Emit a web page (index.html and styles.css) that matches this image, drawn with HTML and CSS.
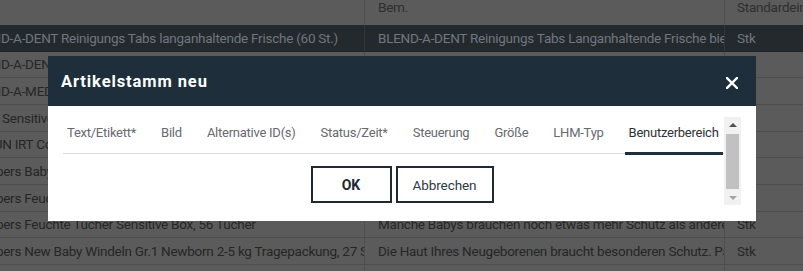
FILE: index.html
```html
<!DOCTYPE html>
<html lang="de">
<head>
<meta charset="utf-8">
<title>Artikelstamm neu</title>
<link rel="stylesheet" href="styles.css">
</head>
<body>
<div class="page">
<div class="grid">
  <div class="row head">
    <div class="cell c1">Bezeichnung</div>
    <div class="cell c2">Bem.</div>
    <div class="cell c3">Standardeinheit</div>
  </div>
  <div class="row selected">
    <div class="cell c1">BLEND-A-DENT Reinigungs Tabs langanhaltende Frische (60 St.)</div>
    <div class="cell c2">BLEND-A-DENT Reinigungs Tabs Langanhaltende Frische bieten</div>
    <div class="cell c3">Stk</div>
  </div>
  <div class="row">
    <div class="cell c1">BLEND-A-DENT Extra Stark Haftcreme Neutral (47 g)</div>
    <div class="cell c2">BLEND-A-DENT Extra Stark Haftcreme sorgt für</div>
    <div class="cell c3">Stk</div>
  </div>
  <div class="row">
    <div class="cell c1">BLEND-A-MED Complete Protect Zahncreme (75 ml)</div>
    <div class="cell c2">BLEND-A-MED Complete Protect schützt</div>
    <div class="cell c3">Stk</div>
  </div>
  <div class="row">
    <div class="cell c1">BLE3 Sensitive Zahnbürste Extra Soft</div>
    <div class="cell c2">Sanfte Reinigung für empfindliche Zähne</div>
    <div class="cell c3">Stk</div>
  </div>
  <div class="row">
    <div class="cell c1">BRAUN IRT Comfort Ohrthermometer</div>
    <div class="cell c2">Präzise Messung in Sekunden</div>
    <div class="cell c3">Stk</div>
  </div>
  <div class="row">
    <div class="cell c1">Pampers Baby Dry Windeln Gr.4 Maxi</div>
    <div class="cell c2">Bis zu 12 Stunden Trockenheit</div>
    <div class="cell c3">Stk</div>
  </div>
  <div class="row">
    <div class="cell c1">Pampers Feuchte Tücher Fresh Clean</div>
    <div class="cell c2">Sanfte Reinigung für jeden Tag</div>
    <div class="cell c3">Stk</div>
  </div>
  <div class="row">
    <div class="cell c1">Pampers Feuchte Tücher Sensitive Box, 56 Tücher</div>
    <div class="cell c2">Manche Babys brauchen noch etwas mehr Schutz als andere.</div>
    <div class="cell c3">Stk</div>
  </div>
  <div class="row">
    <div class="cell c1">Pampers New Baby Windeln Gr.1 Newborn 2-5 kg Tragepackung, 27 Stück</div>
    <div class="cell c2">Die Haut Ihres Neugeborenen braucht besonderen Schutz. Pampers</div>
    <div class="cell c3">Stk</div>
  </div>
  <div class="row last">
    <div class="cell c1"></div>
    <div class="cell c2"></div>
    <div class="cell c3"></div>
  </div>
</div>
</div>

<div class="modal">
  <div class="modal-head">
    <span class="modal-title">Artikelstamm neu</span>
    <svg class="close" width="12" height="12" viewBox="0 0 12 12"><path d="M1 1 L11 11 M11 1 L1 11" stroke="#fff" stroke-width="2.4" stroke-linecap="square"/></svg>
  </div>
  <div class="modal-body">
    <div class="scroll-content">
      <div class="tabs">
        <span class="tab">Text/Etikett*</span>
        <span class="tab">Bild</span>
        <span class="tab">Alternative ID(s)</span>
        <span class="tab">Status/Zeit*</span>
        <span class="tab">Steuerung</span>
        <span class="tab">Größe</span>
        <span class="tab">LHM-Typ</span>
        <span class="tab active">Benutzerbereich</span>
      </div>
      <div class="actions">
        <button class="btn btn-ok">OK</button>
        <button class="btn">Abbrechen</button>
      </div>
    </div>
    <div class="scrollbar">
      <div class="sb-arrow up"></div>
      <div class="sb-thumb"></div>
      <div class="sb-arrow down"></div>
    </div>
  </div>
</div>
</body>
</html>
```

FILE: styles.css
```css
html, body {
  margin: 0;
  padding: 0;
}
body {
  width: 803px;
  height: 271px;
  overflow: hidden;
  background: #5b5b5b;
  font-family: Roboto, "Noto Sans", sans-serif;
  position: relative;
}
.page {
  height: 271px;
  overflow: hidden;
}

.grid {
  margin-left: -31px;
}
.row {
  display: flex;
  height: 26.67px;
  box-sizing: border-box;
  border-bottom: 1px solid #4d4d4d;
  font-size: 13.5px;
  letter-spacing: -0.25px;
  color: #262626;
}
.row.last { height: 12px; border-bottom: none; }
.cell {
  box-sizing: border-box;
  padding: 0 12px;
  white-space: nowrap;
  overflow: hidden;
  display: flex;
  align-items: center;
  border-right: 1px solid #4f4f4f;
}
.c1 { width: 396px; padding-left: 0; }
.c2 { width: 360px; padding-left: 13px; }
.c3 { flex: 1; border-right: none; }

.row.head {
  height: 25px;
  border-bottom: none;
  color: #2e2e2e;
}
.row.head .cell {
  align-items: flex-start;
  line-height: 14px;
}
.row.head .c1 { color: transparent; }

.row.selected {
  background: #24292d;
  color: #6e7780;
  border-bottom: 1px solid #1e2326;
}
.row.selected .cell { border-right-color: #30363a; }

.modal {
  position: absolute;
  left: 48px;
  top: 56px;
  width: 708px;
  height: 165px;
  background: #fff;
  display: flex;
  flex-direction: column;
}
.modal-head {
  height: 50px;
  background: #1e2f3b;
  display: flex;
  align-items: center;
  justify-content: space-between;
  padding: 0 18px 0 13px;
}
.modal-title {
  color: #fff;
  font-weight: 700;
  font-size: 16.5px;
  letter-spacing: 0.9px;
}
.close { display: block; margin-top: 3px; }

.modal-body {
  flex: 1;
  display: flex;
  padding: 11px 15px 16px 15px;
  min-height: 0;
}
.scroll-content {
  flex: 1;
  overflow: hidden;
  min-width: 0;
}
.tabs {
  display: flex;
  height: 36px;
  align-items: center;
  border-bottom: 1px solid #dcdcdc;
  gap: 17px;
}
.tab {
  position: relative;
  padding: 0 4px;
  height: 36px;
  line-height: 32px;
  font-size: 13px;
  letter-spacing: -0.25px;
  color: #666a70;
  white-space: nowrap;
}
.tab.active {
  color: #2d3238;
}
.tab.active::after {
  content: "";
  position: absolute;
  left: 0;
  right: 0;
  bottom: -2px;
  height: 3px;
  background: #1e2f3b;
}
.actions {
  display: flex;
  justify-content: center;
  gap: 4px;
  margin-top: 12px;
  padding-left: 17px;
}
.btn {
  height: 37px;
  box-sizing: border-box;
  border: 2px solid #1d2a33;
  background: #fff;
  font-family: inherit;
  font-size: 13.5px;
  letter-spacing: -0.1px;
  color: #2b3a46;
  padding: 0;
  width: 98px;
}
.btn-ok {
  width: 81px;
  font-weight: 700;
  font-size: 14px;
  color: #1d2a33;
}

.scrollbar {
  width: 17px;
  background: #f1f1f1;
  display: flex;
  flex-direction: column;
  align-items: center;
}
.sb-arrow {
  width: 0;
  height: 0;
  border-left: 4px solid transparent;
  border-right: 4px solid transparent;
}
.sb-arrow.up {
  border-bottom: 4px solid #505050;
  margin: 6px 0 7px;
}
.sb-arrow.down {
  border-top: 4px solid #a3a3a3;
  margin-top: 7px;
}
.sb-thumb {
  width: 13px;
  height: 55px;
  background: #c1c1c1;
}
```
